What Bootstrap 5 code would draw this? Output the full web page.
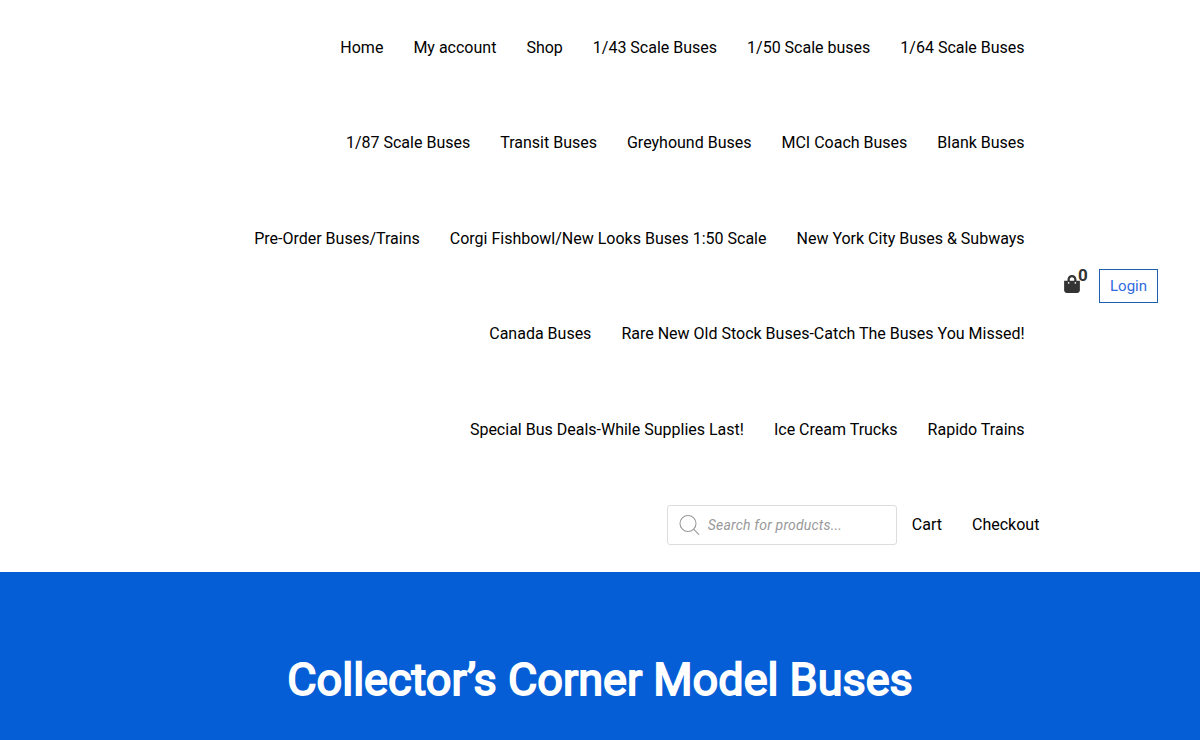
<!DOCTYPE html>
<html lang="en">

<head>
    <meta charset="UTF-8">
    <meta name="viewport" content="width=device-width, initial-scale=1.0">
    <title>Collector’s Corner Model Buses</title>
    <link rel="stylesheet" href="https://cdn.jsdelivr.net/npm/bootstrap@5.3.0/dist/css/bootstrap.min.css">
    <style>
        body {
            font-family: Roboto, sans-serif;
            font-size: 16px;
            color: #000;
            overflow: hidden;
        }

        .site-header {
            height: 572px;
            padding-right: 42px;
        }

        .main-menu {
            width: 840px;
        }

        .menu-row {
            height: 95.47px;
            padding-right: 15.4px;
        }

        .menu-row .nav-link {
            color: #000;
            padding: 0 15px;
            line-height: 24px;
            white-space: nowrap;
        }

        .menu-row-search {
            padding-right: .6px;
        }

        .search-box {
            width: 230px;
            height: 40px;
            border: 1px solid #ddd;
            border-radius: 3px;
            padding: 0 11px;
        }

        .search-box input {
            font-size: 14px;
            font-style: italic;
            line-height: 20px;
            letter-spacing: .19px;
        }

        .search-box input::placeholder {
            color: #999;
            opacity: 1;
        }

        .header-tools {
            margin-left: 8px;
        }

        .cart-link {
            width: 36px;
            height: 34px;
            color: #333;
        }

        .cart-link svg {
            position: absolute;
            left: 1px;
            top: 6px;
        }

        .cart-count {
            position: absolute;
            left: 15px;
            top: -4px;
            font-size: 17px;
            font-weight: 700;
            line-height: 20px;
        }

        .btn-login {
            width: 59px;
            height: 34px;
            padding: 0;
            border: 1px solid #1d5fae;
            border-radius: 0;
            color: #2f6bdf;
            font-size: 15px;
            line-height: 32px;
        }

        .hero {
            height: 168px;
            background: #055ed6;
            padding-top: 78px;
        }

        .hero h1 {
            font-size: 45px;
            font-weight: 400;
            line-height: 60px;
            -webkit-text-stroke: 1.8px #fff;
        }
    </style>
</head>

<body>
    <header class="site-header d-flex justify-content-end align-items-center">
        <nav class="main-menu align-self-start">
            <div class="menu-row nav flex-nowrap justify-content-end align-items-center">
                <a class="nav-link" href="#">Home</a>
                <a class="nav-link" href="#">My account</a>
                <a class="nav-link" href="#">Shop</a>
                <a class="nav-link" href="#">1/43 Scale Buses</a>
                <a class="nav-link" href="#">1/50 Scale buses</a>
                <a class="nav-link" href="#">1/64 Scale Buses</a>
            </div>
            <div class="menu-row nav flex-nowrap justify-content-end align-items-center">
                <a class="nav-link" href="#">1/87 Scale Buses</a>
                <a class="nav-link" href="#">Transit Buses</a>
                <a class="nav-link" href="#">Greyhound Buses</a>
                <a class="nav-link" href="#">MCI Coach Buses</a>
                <a class="nav-link" href="#">Blank Buses</a>
            </div>
            <div class="menu-row nav flex-nowrap justify-content-end align-items-center">
                <a class="nav-link" href="#">Pre-Order Buses/Trains</a>
                <a class="nav-link" href="#">Corgi Fishbowl/New Looks Buses 1:50 Scale</a>
                <a class="nav-link" href="#">New York City Buses &amp; Subways</a>
            </div>
            <div class="menu-row nav flex-nowrap justify-content-end align-items-center">
                <a class="nav-link" href="#">Canada Buses</a>
                <a class="nav-link" href="#">Rare New Old Stock Buses-Catch The Buses You Missed!</a>
            </div>
            <div class="menu-row nav flex-nowrap justify-content-end align-items-center">
                <a class="nav-link" href="#">Special Bus Deals-While Supplies Last!</a>
                <a class="nav-link" href="#">Ice Cream Trucks</a>
                <a class="nav-link" href="#">Rapido Trains</a>
            </div>
            <div class="menu-row menu-row-search nav flex-nowrap justify-content-end align-items-center">
                <form class="search-box d-flex align-items-center">
                    <svg width="21" height="21" viewBox="0 0 21 21" fill="none" stroke="#999" stroke-width="1.1">
                        <circle cx="9" cy="8.500" r="8" />
                        <path d="M14.600 14.200L20 19.600" />
                    </svg>
                    <input class="border-0 p-0 ms-2 w-75" type="text" placeholder="Search for products...">
                </form>
                <a class="nav-link" href="#">Cart</a>
                <a class="nav-link" href="#">Checkout</a>
            </div>
        </nav>
        <div class="header-tools d-flex">
            <a class="cart-link position-relative text-decoration-none" href="#">
                <svg width="16" height="18" viewBox="0 0 448 512" fill="currentColor">
                    <path d="M352 160v-32C352 57.400 294.600 0 224 0S96 57.400 96 128v32H0v272c0 44.200 35.800 80 80 80h288c44.200 0 80-35.800 80-80V160h-96zm-192-32c0-35.300 28.700-64 64-64s64 28.700 64 64v32H160v-32zm160 120c-13.300 0-24-10.700-24-24s10.700-24 24-24 24 10.700 24 24-10.700 24-24 24zm-192 0c-13.300 0-24-10.700-24-24s10.700-24 24-24 24 10.700 24 24-10.700 24-24 24z" />
                </svg>
                <span class="cart-count">0</span>
            </a>
            <a class="btn btn-login" href="#">Login</a>
        </div>
    </header>

    <section class="hero text-center text-white">
        <h1 class="m-0">Collector’s Corner Model Buses</h1>
    </section>

    <script src="https://cdn.jsdelivr.net/npm/bootstrap@5.3.0/dist/js/bootstrap.bundle.min.js"></script>
</body>

</html>
